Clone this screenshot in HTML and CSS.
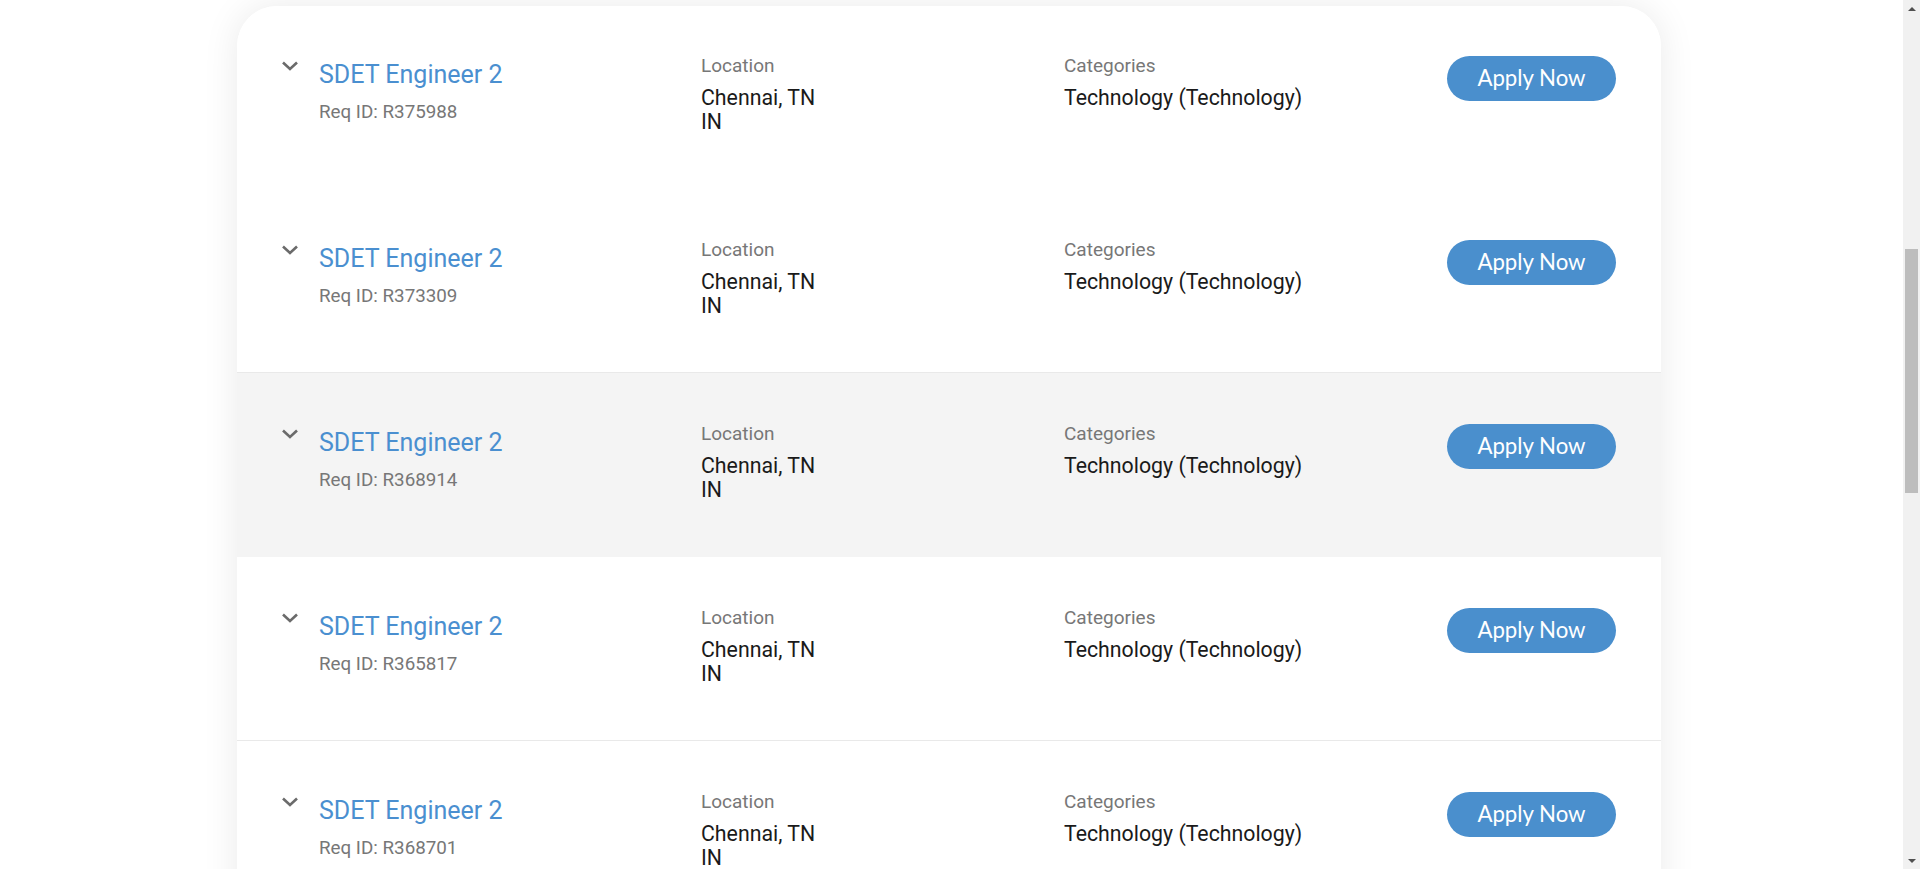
FILE: index.html
```html
<!DOCTYPE html>
<html lang="en">
<head>
<meta charset="utf-8">
<title>Job results</title>
<link rel="stylesheet" href="styles.css">
</head>
<body>
<div class="page">
  <main class="content">
    <section class="card">
      <article class="job job-first">
        <svg class="chev" viewBox="0 0 18 10" width="18" height="10"><path d="M2 1.5 L9 8 L16 1.5" /></svg>
        <div class="job-main">
          <a class="job-title" href="#">SDET Engineer 2</a>
          <div class="req">Req ID: R375988</div>
        </div>
        <div class="field">
          <div class="label">Location</div>
          <div class="value">Chennai, TN<br>IN</div>
        </div>
        <div class="field">
          <div class="label">Categories</div>
          <div class="value">Technology (Technology)</div>
        </div>
        <a class="apply" href="#">Apply Now</a>
      </article>
      <article class="job job-sep">
        <svg class="chev" viewBox="0 0 18 10" width="18" height="10"><path d="M2 1.5 L9 8 L16 1.5" /></svg>
        <div class="job-main">
          <a class="job-title" href="#">SDET Engineer 2</a>
          <div class="req">Req ID: R373309</div>
        </div>
        <div class="field">
          <div class="label">Location</div>
          <div class="value">Chennai, TN<br>IN</div>
        </div>
        <div class="field">
          <div class="label">Categories</div>
          <div class="value">Technology (Technology)</div>
        </div>
        <a class="apply" href="#">Apply Now</a>
      </article>
      <article class="job job-hover">
        <svg class="chev" viewBox="0 0 18 10" width="18" height="10"><path d="M2 1.5 L9 8 L16 1.5" /></svg>
        <div class="job-main">
          <a class="job-title" href="#">SDET Engineer 2</a>
          <div class="req">Req ID: R368914</div>
        </div>
        <div class="field">
          <div class="label">Location</div>
          <div class="value">Chennai, TN<br>IN</div>
        </div>
        <div class="field">
          <div class="label">Categories</div>
          <div class="value">Technology (Technology)</div>
        </div>
        <a class="apply" href="#">Apply Now</a>
      </article>
      <article class="job job-sep">
        <svg class="chev" viewBox="0 0 18 10" width="18" height="10"><path d="M2 1.5 L9 8 L16 1.5" /></svg>
        <div class="job-main">
          <a class="job-title" href="#">SDET Engineer 2</a>
          <div class="req">Req ID: R365817</div>
        </div>
        <div class="field">
          <div class="label">Location</div>
          <div class="value">Chennai, TN<br>IN</div>
        </div>
        <div class="field">
          <div class="label">Categories</div>
          <div class="value">Technology (Technology)</div>
        </div>
        <a class="apply" href="#">Apply Now</a>
      </article>
      <article class="job">
        <svg class="chev" viewBox="0 0 18 10" width="18" height="10"><path d="M2 1.5 L9 8 L16 1.5" /></svg>
        <div class="job-main">
          <a class="job-title" href="#">SDET Engineer 2</a>
          <div class="req">Req ID: R368701</div>
        </div>
        <div class="field">
          <div class="label">Location</div>
          <div class="value">Chennai, TN<br>IN</div>
        </div>
        <div class="field">
          <div class="label">Categories</div>
          <div class="value">Technology (Technology)</div>
        </div>
        <a class="apply" href="#">Apply Now</a>
      </article>
    </section>
  </main>
  <aside class="scrollbar" aria-hidden="true">
    <div class="sb-btn"><span class="arrow-up"></span></div>
    <div class="sb-track"><div class="sb-thumb"></div></div>
    <div class="sb-btn"><span class="arrow-down"></span></div>
  </aside>
</div>
</body>
</html>
```
FILE: styles.css
```css
html, body {
  margin: 0;
  padding: 0;
  background: #ffffff;
}

body {
  font-family: Roboto, "Liberation Sans", Arial, sans-serif;
  color: #1c1c1c;
}

.page {
  display: flex;
  height: 869px;
  overflow: hidden;
}

.content {
  flex: 1;
  padding: 6px 0 0 237px;
  overflow: hidden;
}

.card {
  width: 1424px;
  background: #ffffff;
  border-radius: 40px 40px 0 0;
  box-shadow: 0 0 36px rgba(0, 0, 0, 0.085);
  overflow: hidden;
}

.job {
  display: grid;
  grid-template-columns: 38px 382px 363px 383px 169px;
  align-items: start;
  box-sizing: border-box;
  height: 184px;
  padding: 50px 45px 0 44px;
  background: #ffffff;
}

.job-first {
  height: 183px;
  padding-top: 49px;
}

.job-sep {
  border-bottom: 1px solid #e9e9e9;
}

.job-hover {
  background: #f4f4f4;
}

.chev {
  margin-top: 6px;
  fill: none;
  stroke: #6b6b6b;
  stroke-width: 2.6;
  stroke-linecap: butt;
  stroke-linejoin: miter;
}

.job-main {
  margin-top: 5px;
  display: flex;
  flex-direction: column;
  align-items: flex-start;
}

.job-title {
  font-size: 25px;
  line-height: 30px;
  color: #4a8fd0;
  text-decoration: none;
}

.req {
  margin-top: 9.5px;
  font-size: 18.8px;
  line-height: 24px;
  color: #777777;
}

.field {
  margin-top: 0;
}

.label {
  font-size: 19px;
  line-height: 22px;
  color: #777777;
}

.value {
  margin-top: 9px;
  font-size: 21.3px;
  line-height: 24px;
  color: #1a1a1a;
}

.apply {
  margin-top: 1px;
  box-sizing: border-box;
  height: 45px;
  padding-bottom: 2px;
  border-radius: 23px;
  background: #4a8fcd;
  color: #ffffff;
  font-family: Lato, "Liberation Sans", Arial, sans-serif;
  font-size: 22.2px;
  text-decoration: none;
  display: flex;
  align-items: center;
  justify-content: center;
}

.scrollbar {
  width: 17px;
  flex: none;
  background: #f1f1f1;
  display: flex;
  flex-direction: column;
}

.sb-btn {
  height: 17px;
  display: flex;
  align-items: center;
  justify-content: center;
}

.arrow-up {
  width: 0;
  height: 0;
  border-left: 4px solid transparent;
  border-right: 4px solid transparent;
  border-bottom: 4px solid #505050;
}

.arrow-down {
  width: 0;
  height: 0;
  border-left: 4px solid transparent;
  border-right: 4px solid transparent;
  border-top: 4px solid #505050;
}

.sb-track {
  flex: 1;
}

.sb-thumb {
  margin: 232px 2px 0;
  height: 244px;
  background: #bdbdbd;
}
```
